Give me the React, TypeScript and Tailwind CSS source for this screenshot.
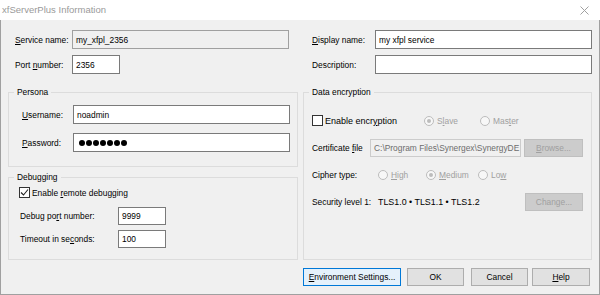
import React from 'react';

const ui = "font-['Liberation_Sans',Arial,sans-serif] text-[8.4px] leading-[12px] text-black whitespace-nowrap";

const GroupBox: React.FC<{ title: string; className?: string; children: React.ReactNode }> = ({ title, className, children }) => (
  <div className={`border border-[#dcdcdc] flex flex-col ${className ?? ''}`}>
    <div className="-mt-[7px] ml-[5px] px-[3px] h-[12px] leading-[12px] w-fit bg-[#f0f0f0]">{title}</div>
    {children}
  </div>
);

const TextBox: React.FC<{ value?: string; className?: string; disabled?: boolean }> = ({ value, className, disabled }) => (
  <div
    className={`flex items-center px-[3px] border overflow-hidden ${
      disabled ? 'bg-[#f0f0f0] border-[#cccccc] text-[#6d6d6d]' : 'bg-white border-[#7a7a7a]'
    } ${className ?? ''}`}
  >
    <span>{value}</span>
  </div>
);

const CheckBox: React.FC<{ checked?: boolean }> = ({ checked }) => (
  <div className="w-[11px] h-[11px] border border-[#333333] bg-white flex items-center justify-center shrink-0">
    {checked && (
      <svg width="9" height="9" viewBox="0 0 9 9">
        <polyline points="1,4.5 3.5,7 8,1.5" fill="none" stroke="#222" strokeWidth="1.1" />
      </svg>
    )}
  </div>
);

const Radio: React.FC<{ checked?: boolean }> = ({ checked }) => (
  <div className="w-[10px] h-[10px] rounded-full border border-[#bcbcbc] bg-[#f7f7f7] flex items-center justify-center shrink-0">
    {checked && <div className="w-[4px] h-[4px] rounded-full bg-[#bcbcbc]" />}
  </div>
);

const Button: React.FC<{ className?: string; children: React.ReactNode; disabled?: boolean; focused?: boolean }> = ({
  className,
  children,
  disabled,
  focused,
}) => (
  <div
    className={`h-[18px] flex items-center justify-center border ${
      disabled
        ? 'bg-[#cccccc] border-[#bfbfbf] text-[#a0a0a0]'
        : focused
        ? 'bg-[#e5f1fb] border-[#0078d7]'
        : 'bg-[#e1e1e1] border-[#adadad]'
    } ${className ?? ''}`}
  >
    {children}
  </div>
);

export default function App() {
  return (
    <div className={`w-[600px] h-[295px] flex flex-col bg-white ${ui}`}>
      {/* title bar */}
      <div className="h-[20px] flex items-center justify-between pl-[2px] pr-[11px] bg-white">
        <span className="text-[9.5px] text-[#9a9a9a]">xfServerPlus Information</span>
        <svg width="9" height="9" viewBox="0 0 9 9">
          <path d="M0.5 0.5 L8.5 8.5 M8.5 0.5 L0.5 8.5" stroke="#a0a0a0" strokeWidth="1" />
        </svg>
      </div>

      {/* body */}
      <div className="flex-1 bg-[#f0f0f0] border-l border-r border-b border-[#a0a0a0] px-[7px] pt-[10px] flex gap-[5px]">
        {/* left column */}
        <div className="w-[290px] flex flex-col">
          <div className="h-[19px] flex items-center">
            <span className="w-[64px] pl-[7px]"><u>S</u>ervice name:</span>
            <div className="w-[217px] h-[19px] bg-[#f0f0f0] border border-[#a0a0a0] flex items-center px-[3px]">my_xfpl_2356</div>
          </div>
          <div className="h-[19px] mt-[6px] flex items-center">
            <span className="w-[64px] pl-[7px]">Port <u>n</u>umber:</span>
            <TextBox value="2356" className="w-[48px] h-[19px]" />
          </div>

          <GroupBox title="Persona" className="mt-[18px] h-[75px]">
            <div className="h-[19px] mt-[7px] flex items-center">
              <span className="w-[64px] pl-[13px]"><u>U</u>sername:</span>
              <TextBox value="noadmin" className="w-[217px] h-[19px]" />
            </div>
            <div className="h-[19px] mt-[9px] flex items-center">
              <span className="w-[64px] pl-[13px]"><u>P</u>assword:</span>
              <div className="w-[217px] h-[19px] bg-white border border-[#7a7a7a] flex items-center gap-[1px] pl-[5px]">
                {Array.from({ length: 7 }).map((_, i) => (
                  <span key={i} className="w-[6px] h-[6px] rounded-full bg-black" />
                ))}
              </div>
            </div>
          </GroupBox>

          <GroupBox title="Debugging" className="mt-[10px] h-[83px]">
            <div className="h-[13px] mt-[3px] pl-[10px] flex items-center gap-[2px]">
              <CheckBox checked />
              <span>Enable <u>r</u>emote debugging</span>
            </div>
            <div className="h-[18px] mt-[8px] flex items-center">
              <span className="w-[109px] pl-[11px]">Debug po<u>r</u>t number:</span>
              <TextBox value="9999" className="w-[48px] h-[18px]" />
            </div>
            <div className="h-[18px] mt-[5px] flex items-center">
              <span className="w-[109px] pl-[11px]">Timeout in se<u>c</u>onds:</span>
              <TextBox value="100" className="w-[48px] h-[18px]" />
            </div>
          </GroupBox>
        </div>

        {/* right column */}
        <div className="w-[289px] flex flex-col">
          <div className="h-[19px] flex items-center">
            <span className="w-[72px] pl-[9px]"><u>D</u>isplay name:</span>
            <TextBox value="my xfpl service" className="w-[217px] h-[19px]" />
          </div>
          <div className="h-[19px] mt-[6px] flex items-center">
            <span className="w-[72px] pl-[9px]">Description:</span>
            <TextBox className="w-[217px] h-[19px]" />
          </div>

          <GroupBox title="Data encryption" className="mt-[18px] h-[168px]">
            <div className="h-[13px] mt-[16px] pl-[8px] flex items-center">
              <div className="w-[112px] flex items-center gap-[2px]">
                <CheckBox />
                <span className="text-[9px]">Enable encr<u>y</u>ption</span>
              </div>
              <div className="w-[56px] flex items-center gap-[3px] text-[#a0a0a0]">
                <Radio checked />
                <span>S<u>l</u>ave</span>
              </div>
              <div className="flex items-center gap-[3px] text-[#a0a0a0]">
                <Radio />
                <span>Mas<u>t</u>er</span>
              </div>
            </div>

            <div className="h-[18px] mt-[12px] pl-[8px] pr-[8px] flex items-center">
              <span className="w-[58px]">Certificate <u>f</u>ile</span>
              <TextBox value="C:\Program Files\Synergex\SynergyDE" disabled className="w-[151px] h-[18px]" />
              <Button disabled className="ml-[3px] w-[59px] h-[17px]"><span><u>B</u>rowse...</span></Button>
            </div>

            <div className="h-[13px] mt-[11px] pl-[8px] flex items-center">
              <span className="w-[66px]">Cipher type:</span>
              <div className="w-[48px] flex items-center gap-[3px] text-[#a0a0a0]">
                <Radio />
                <span><u>H</u>igh</span>
              </div>
              <div className="w-[52px] flex items-center gap-[3px] text-[#a0a0a0]">
                <Radio checked />
                <span><u>M</u>edium</span>
              </div>
              <div className="flex items-center gap-[3px] text-[#a0a0a0]">
                <Radio />
                <span>Lo<u>w</u></span>
              </div>
            </div>

            <div className="h-[17px] mt-[12px] pl-[8px] pr-[8px] flex items-center">
              <span className="w-[66px]">Security level 1:</span>
              <span className="text-[8.9px]">TLS1.0 • TLS1.1 • TLS1.2</span>
              <Button disabled className="ml-auto w-[58px] h-[17px]"><span>Change...</span></Button>
            </div>
          </GroupBox>

          <div className="mt-[8px] flex items-center">
            <Button focused className="w-[98px]"><span><u>E</u>nvironment Settings...</span></Button>
            <Button className="ml-[6px] w-[57px]"><span>OK</span></Button>
            <Button className="ml-[7px] w-[57px]"><span>Cancel</span></Button>
            <Button className="ml-[4px] w-[58px]"><span><u>H</u>elp</span></Button>
          </div>
        </div>
      </div>
    </div>
  );
}
